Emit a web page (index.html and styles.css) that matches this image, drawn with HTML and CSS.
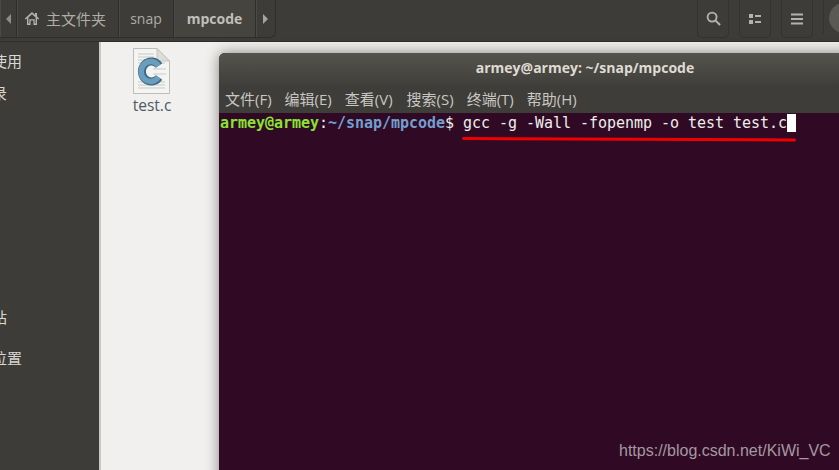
FILE: index.html
```html
<!DOCTYPE html>
<html lang="zh">
<head>
<meta charset="utf-8">
<title>mpcode</title>
<link rel="stylesheet" href="styles.css">
</head>
<body>
<div class="app">
  <header class="toolbar">
    <div class="pathbar">
      <button class="seg seg-nav">
        <svg width="7" height="10" viewBox="0 0 7 10"><path d="M6 0v10L1 5z" fill="#8e8d88"/></svg>
      </button>
      <button class="seg seg-home">
        <svg width="16" height="15" viewBox="0 0 16 15"><path d="M8 1 .8 7.6l1 1L3 7.6V14h3.6V9.6h2.8V14H13V7.6l1.2 1 1-1L13 5.6V2h-2v1.8z M8 3.2l3.6 3.3V12.6h-.9V8.2H5.3v4.4h-.9V6.500z" fill="#b3b2ad" fill-rule="evenodd"/></svg>
        <span>主文件夹</span>
      </button>
      <button class="seg seg-snap">snap</button>
      <button class="seg seg-current">mpcode</button>
      <button class="seg seg-next">
        <svg width="7" height="10" viewBox="0 0 7 10"><path d="M1 0v10l5-5z" fill="#a5a49f"/></svg>
      </button>
    </div>
    <div class="actions">
      <button class="tool">
        <svg width="15" height="15" viewBox="0 0 16 16"><circle cx="6.500" cy="6.500" r="4.800" fill="none" stroke="#b3b2ad" stroke-width="2"/><path d="m10 10 5 5" stroke="#b3b2ad" stroke-width="2.200"/></svg>
      </button>
      <button class="tool">
        <svg width="12" height="10" viewBox="0 0 12 10"><path d="M0 0h4v4H0zM0 6h4v4H0zM6 1h6v2H6zM6 7h6v2H6z" fill="#b3b2ad"/></svg>
      </button>
      <button class="tool">
        <svg width="12" height="12" viewBox="0 0 12 12"><path d="M0 .5h12v2H0zM0 5h12v2H0zM0 9.500h12v2H0z" fill="#b3b2ad"/></svg>
      </button>
      <span class="sep"></span>
      <span class="win-btn"></span>
    </div>
  </header>
  <div class="main">
    <nav class="sidebar">
      <div class="place">最近使用</div>
      <div class="place">主目录</div>
      <div class="place place-trash">回收站</div>
      <div class="place place-other">其他位置</div>
    </nav>
    <section class="files">
      <figure class="file">
        <svg class="file-icon" width="37" height="46" viewBox="0 0 37 46">
          <path d="M.5.500H24L36.500 13V45.500H.5z" fill="#f4f4f2" stroke="#bdbdb9"/>
          <path d="M24 .5V13h12.500z" fill="#dcdcd9" stroke="#c4c4c0"/>
          <path d="M5 6h16M5 9h16M5 12h18M5 15h27M5 34h27M5 37h27M5 40h27M20 21h13M20 26h13" stroke="#c9c9c6"/>
          <path d="M26 17.500A9.500 10 0 1 0 26 29.500" fill="none" stroke="#3a6a87" stroke-width="8"/>
          <path d="M25.500 17.900A9.500 10 0 1 0 25.500 29.100" fill="none" stroke="#6b9dbc" stroke-width="5.500"/>
        </svg>
        <figcaption>test.c</figcaption>
      </figure>
    </section>
  </div>
  <div class="terminal">
    <div class="term-title">armey@armey: ~/snap/mpcode</div>
    <div class="term-menu">
      <span>文件(F)</span><span>编辑(E)</span><span class="menu-wide">查看(V)</span><span>搜索(S)</span><span>终端(T)</span><span>帮助(H)</span>
    </div>
    <pre class="term-body"><span class="p-user">armey@armey</span><span class="p-colon">:</span><span class="p-path">~/snap/mpcode</span><span class="p-colon">$ </span><span class="p-cmd">gcc -g -Wall -fopenmp -o test test.c</span><span class="cursor"> </span></pre>
  </div>
  <svg class="underline" width="340" height="6" viewBox="0 0 340 6"><path d="M1.500 1.500 332.500 3" stroke="#f00000" stroke-width="3" stroke-linecap="round" fill="none"/></svg>
  <div class="watermark">https://blog.csdn.net/KiWi_VC</div>
</div>
</body>
</html>
```
FILE: styles.css
```css
* { box-sizing: border-box; }
html, body { margin: 0; height: 100%; }
body { overflow: hidden; background: #3d3c38; }
.app {
  position: relative;
  width: 839px;
  height: 470px;
  overflow: hidden;
  display: flex;
  flex-direction: column;
  font-family: "Open Sans", "Noto Sans CJK SC", sans-serif;
}
button { font: inherit; margin: 0; padding: 0; background: none; color: inherit; }
.toolbar {
  height: 42px;
  flex: none;
  display: flex;
  justify-content: space-between;
  background: #3d3c38;
  border-bottom: 1px solid #2f2e2b;
}
.pathbar {
  display: flex;
  height: 38px;
  color: #aeada8;
  font-size: 14px;
}
.seg {
  display: flex;
  align-items: center;
  justify-content: center;
  gap: 6px;
  border: 0;
  border-right: 1px solid #2f2e2b;
  box-shadow: inset 1px 0 0 #4a4945;
  border-bottom: 1px solid #2f2e2b;
}
.seg-nav { width: 17px; }
.seg-home { width: 102px; justify-content: flex-start; padding-left: 7px; font-size: 15px; }
.seg-snap { width: 55px; }
.seg-current {
  width: 81px;
  color: #c0bfba;
  font-weight: 700;
  background: #45443f;
  border-right: 0;
}
.seg-next { width: 21px; border-radius: 0 0 6px 0; border-left: 1px solid #2f2e2b; }
.actions { display: flex; gap: 10px; height: 38px; margin-right: -20px; }
.tool {
  width: 32px;
  display: flex;
  align-items: center;
  justify-content: center;
  border: 1px solid #33322f;
  border-top: 0;
  border-radius: 0 0 5px 5px;
}
.sep { width: 1px; height: 34px; background: #33322f; }
.win-btn {
  width: 30px;
  height: 30px;
  margin: 3px 0 0 -5px;
  border-radius: 50%;
  background: #5a5954;
}
.main { flex: 1; display: flex; min-height: 0; }
.sidebar {
  width: 99px;
  flex: none;
  background: #3d3c38;
  color: #d8d7d3;
  font-size: 15px;
  line-height: 20px;
  overflow: hidden;
  padding-top: 9px;
}
.place { margin-left: -38px; height: 32px; white-space: nowrap; }
.place-trash { margin-top: 192px; }
.place-other { margin-top: 9px; }
.files {
  flex: 1;
  background: #f1f0ee;
  border-left: 2px solid #c9c8c4;
  padding: 6px 0 0 29px;
}
.file { margin: 0; width: 44px; display: flex; flex-direction: column; align-items: center; }
.file-icon { display: block; margin-left: -1px; }
.file figcaption { font-size: 15.500px; color: #4e5a66; line-height: 18px; margin-top: 2px; }
.terminal {
  position: absolute;
  left: 219px;
  top: 53px;
  width: 732px;
  height: 430px;
  border-radius: 6px 6px 0 0;
  background: #300a24;
  box-shadow: 0 0 14px rgba(0,0,0,.45);
  display: flex;
  flex-direction: column;
}
.term-title {
  height: 32px;
  flex: none;
  background: linear-gradient(#55534d, #413f3b);
  border-radius: 6px 6px 0 0;
  color: #dfdbd2;
  font-size: 14px;
  font-weight: 700;
  line-height: 30px;
  text-align: center;
}
.term-menu {
  height: 28px;
  flex: none;
  background: #3e3d39;
  display: flex;
  gap: 13px;
  padding-left: 6px;
  color: #c8c7c2;
  font-size: 15px;
  line-height: 29px;
}
.menu-wide { margin-right: 1px; }
.term-body {
  margin: 0;
  flex: 1;
  padding: 1px 0 0 1px;
  font-family: "DejaVu Sans Mono", monospace;
  font-size: 15px;
  letter-spacing: -0.03px;
  line-height: 18px;
}
.p-user { color: #8ae234; font-weight: 700; }
.p-colon { color: #eeeeec; }
.p-path { color: #729fcf; font-weight: 700; }
.p-cmd { color: #eeeeec; }
.cursor { background: #fff; }
.underline { position: absolute; left: 462px; top: 137px; }
.watermark {
  position: absolute;
  left: 619px;
  top: 442px;
  color: #a498a2;
  font-family: "Liberation Sans", sans-serif;
  font-size: 16px;
  line-height: 18px;
}
```
